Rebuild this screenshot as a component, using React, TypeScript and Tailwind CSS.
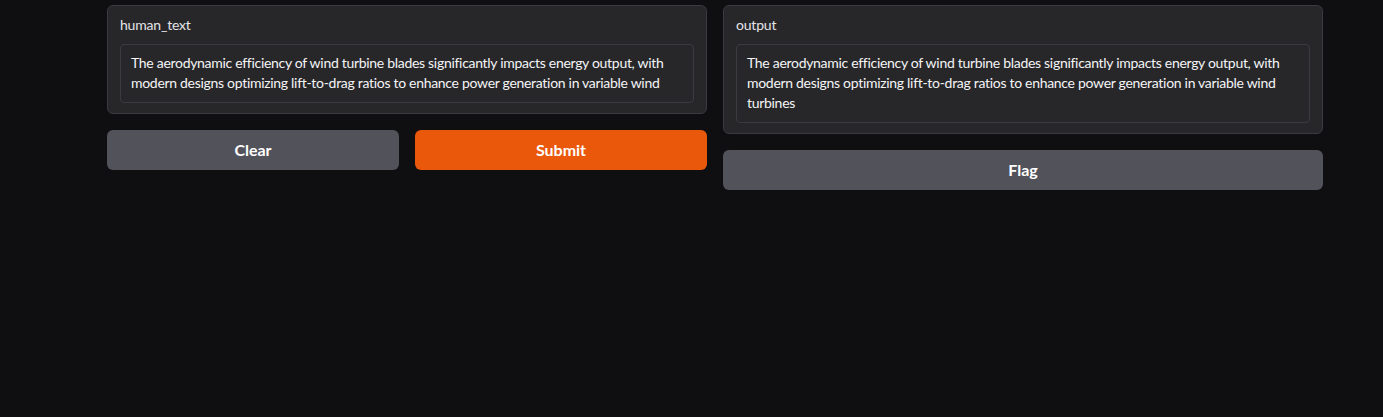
import React from "react";

const text =
  "The aerodynamic efficiency of wind turbine blades significantly impacts energy output, with modern designs optimizing lift-to-drag ratios to enhance power generation in variable wind";
const outText = text + " turbines";

function Panel({ label, value, rows }: { label: string; value: string; rows: number }) {
  return (
    <div className="rounded-[6px] border border-[#3a3a40] bg-[#27272a] px-[12px] pt-[9px] pb-[10px]">
      <div className="text-[14px] leading-[20px] text-[#e4e4e7] mb-[9px] tracking-[-0.2px]">{label}</div>
      <div
        className="rounded-[4px] border border-[#3a3a40] bg-[#27272a] px-[10px] pt-[8px] text-[14px] leading-[20px] text-[#f4f4f5] overflow-hidden tracking-[-0.3px]"
        style={{ height: rows * 20 + 19 }}
      >
        {value}
      </div>
    </div>
  );
}

export default function App() {
  return (
    <div
      className="w-[1383px] h-[417px] bg-[#0f0f11] overflow-hidden"
      style={{ fontFamily: '"Lato", "Liberation Sans", sans-serif' }}
    >
      <div className="ml-[107px] w-[1216px] pt-[5px] flex gap-[16px] items-start">
        <div className="w-[600px] flex flex-col gap-[16px]">
          <Panel label="human_text" value={text} rows={2} />
          <div className="flex gap-[16px]">
            <button className="flex-1 h-[40px] rounded-[6px] bg-[#52525b] text-white font-bold text-[16px]">
              Clear
            </button>
            <button className="flex-1 h-[40px] rounded-[6px] bg-[#ea580c] text-white font-bold text-[16px]">
              Submit
            </button>
          </div>
        </div>
        <div className="w-[600px] flex flex-col gap-[16px]">
          <Panel label="output" value={outText} rows={3} />
          <button className="w-full h-[40px] rounded-[6px] bg-[#52525b] text-white font-bold text-[16px]">
            Flag
          </button>
        </div>
      </div>
    </div>
  );
}
